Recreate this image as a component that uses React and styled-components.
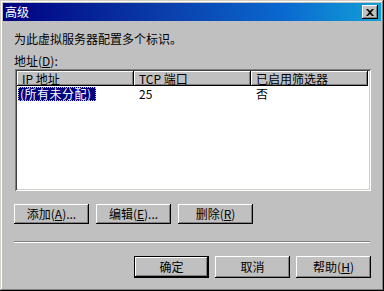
import React from 'react';
import styled, { createGlobalStyle } from 'styled-components';

const GlobalStyle = createGlobalStyle`
  html, body {
    margin: 0;
    padding: 0;
    background: #c0c0c0;
  }
  body {
    font-family: "Noto Sans CJK SC", "DejaVu Sans", sans-serif;
    font-size: 12px;
  }
`;

const Window = styled.div`
  width: 384px;
  height: 291px;
  box-sizing: border-box;
  padding: 3px;
  background: #c0c0c0;
  box-shadow:
    inset -1px -1px #000000,
    inset 1px 1px #d4d0c8,
    inset -2px -2px #808080,
    inset 2px 2px #ffffff;
  display: flex;
  flex-direction: column;
`;

const TitleBar = styled.div`
  height: 18px;
  display: flex;
  align-items: center;
  justify-content: space-between;
  padding: 0 3px 0 2px;
  background: linear-gradient(90deg, #000080 0%, #0a3aa8 40%, #0a6ad0 75%, #12a0d6 100%);
`;

const Title = styled.span`
  color: #ffffff;
  font-size: 12px;
  line-height: 14px;
`;

const CloseButton = styled.div`
  width: 16px;
  height: 14px;
  box-sizing: border-box;
  background: #c0c0c0;
  display: flex;
  align-items: center;
  justify-content: center;
  box-shadow:
    inset -1px -1px #000000,
    inset 1px 1px #ffffff,
    inset -2px -2px #808080;
`;

const Body = styled.div`
  flex: 1;
  display: flex;
  flex-direction: column;
  padding: 11px 10px 0 11px;
  color: #000000;
`;

const Line = styled.div`
  line-height: 14px;
  height: 14px;
  white-space: nowrap;
  margin-bottom: ${p => p.$gap || 0}px;
`;

const Key = styled.span`
  text-decoration: underline;
`;

const ListView = styled.div`
  margin: 1px 0 0 1px;
  width: 356px;
  height: 122px;
  box-sizing: border-box;
  padding: 2px;
  background: #ffffff;
  box-shadow:
    inset 1px 1px #808080,
    inset -1px -1px #ffffff,
    inset 2px 2px #404040,
    inset -2px -2px #d4d0c8;
`;

const HeaderRow = styled.div`
  display: grid;
  grid-template-columns: 117px 117px 117px;
  height: 15px;
`;

const HeaderCell = styled.div`
  box-sizing: border-box;
  background: #c0c0c0;
  padding-left: 5px;
  line-height: 15px;
  height: 15px;
  white-space: nowrap;
  box-shadow:
    inset -1px -1px #000000,
    inset 1px 1px #ffffff,
    inset -2px -2px #808080;
`;

const Row = styled.div`
  display: grid;
  grid-template-columns: 117px 117px 117px;
  height: 14px;
  margin-top: 1px;
`;

const Cell = styled.div`
  padding-left: ${p => (p.$first ? 1 : 5)}px;
  line-height: 14px;
  white-space: nowrap;
`;

const Selected = styled.span`
  display: inline-block;
  background: #000080;
  color: #ffffff;
  padding: 0 4px 0 2px;
  letter-spacing: 0.5px;
  outline: 1px dotted #c0c0c0;
  outline-offset: -1px;
  line-height: 14px;
`;

const ButtonRow = styled.div`
  display: flex;
  gap: ${p => p.$gap}px;
  justify-content: ${p => (p.$end ? 'flex-end' : 'flex-start')};
  margin-top: ${p => p.$top}px;
`;

const Button = styled.div`
  width: 75px;
  height: ${p => p.$h || 20}px;
  box-sizing: border-box;
  background: #c0c0c0;
  display: flex;
  align-items: center;
  justify-content: center;
  white-space: nowrap;
  line-height: 14px;
  box-shadow: ${p =>
    p.$default
      ? 'inset -1px -1px #000000, inset 1px 1px #000000, inset -2px -2px #000000, inset 2px 2px #ffffff, inset -3px -3px #808080'
      : 'inset -1px -1px #000000, inset 1px 1px #ffffff, inset -2px -2px #808080'};
`;

const Separator = styled.div`
  margin: 17px 0 0 0;
  height: 0;
  border-top: 1px solid #808080;
  border-bottom: 1px solid #ffffff;
  width: 356px;
`;

const CloseIcon = () => (
  <svg width="8" height="7" viewBox="0 0 8 7">
    <path d="M0 0h2l2 2 2-2h2L5 3.5 8 7H6L4 5 2 7H0l3-3.5z" fill="#000" />
  </svg>
);

export default function App() {
  return (
    <>
      <GlobalStyle />
      <Window>
        <TitleBar>
          <Title>高级</Title>
          <CloseButton>
            <CloseIcon />
          </CloseButton>
        </TitleBar>
        <Body>
          <Line $gap={8}>为此虚拟服务器配置多个标识。</Line>
          <Line>
            地址(<Key>D</Key>):
          </Line>
          <ListView>
            <HeaderRow>
              <HeaderCell>IP 地址</HeaderCell>
              <HeaderCell>TCP 端口</HeaderCell>
              <HeaderCell>已启用筛选器</HeaderCell>
            </HeaderRow>
            <Row>
              <Cell $first>
                <Selected>(所有未分配)</Selected>
              </Cell>
              <Cell>25</Cell>
              <Cell>否</Cell>
            </Row>
          </ListView>
          <ButtonRow $gap={7} $top={13}>
            <Button>
              添加(<Key>A</Key>)...
            </Button>
            <Button>
              编辑(<Key>E</Key>)...
            </Button>
            <Button>
              删除(<Key>R</Key>)
            </Button>
          </ButtonRow>
          <Separator />
          <ButtonRow $gap={6} $top={13} $end>
            <Button $h={22} $default>确定</Button>
            <Button $h={22}>取消</Button>
            <Button $h={22}>
              帮助(<Key>H</Key>)
            </Button>
          </ButtonRow>
        </Body>
      </Window>
    </>
  );
}
